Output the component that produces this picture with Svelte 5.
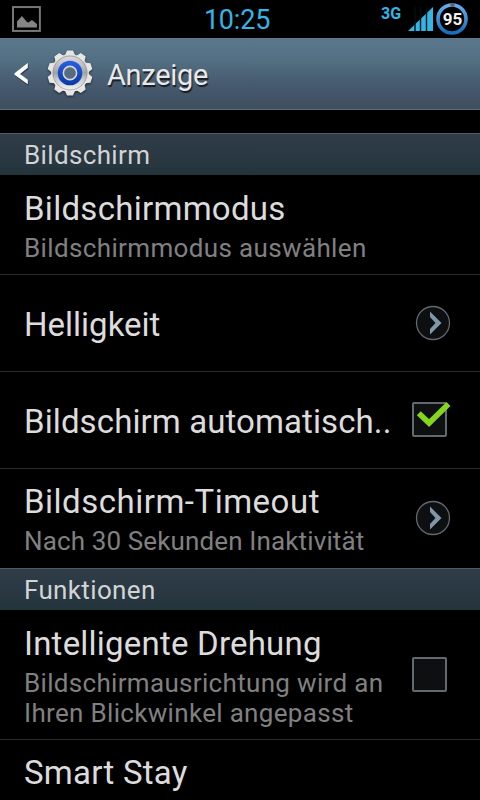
<script lang="ts">
  interface Item {
    title: string;
    tracking: number;
    summary?: string;
    summaryTracking?: number;
    widget?: "arrow" | "checkbox";
    checked?: boolean;
    height: number;
  }

  interface Section {
    label: string;
    items: Item[];
  }

  let sections: Section[] = $state([
    {
      label: "Bildschirm",
      items: [
        {
          title: "Bildschirmmodus",
          tracking: 0.28,
          summary: "Bildschirmmodus auswählen",
          summaryTracking: 0.36,
          height: 100,
        },
        { title: "Helligkeit", tracking: 0, widget: "arrow", height: 97 },
        {
          title: "Bildschirm automatisch..",
          tracking: 0.1,
          widget: "checkbox",
          checked: true,
          height: 97,
        },
        {
          title: "Bildschirm-Timeout",
          tracking: 0.5,
          summary: "Nach 30 Sekunden Inaktivität",
          summaryTracking: 0.13,
          widget: "arrow",
          height: 99,
        },
      ],
    },
    {
      label: "Funktionen",
      items: [
        {
          title: "Intelligente Drehung",
          tracking: 0.21,
          summary: "Bildschirmausrichtung wird an Ihren Blickwinkel angepasst",
          summaryTracking: 0.32,
          widget: "checkbox",
          checked: false,
          height: 130,
        },
        { title: "Smart Stay", tracking: 0.25, height: 64 },
      ],
    },
  ]);

  const teeth = [0, 36, 72, 108, 144, 180, 216, 252, 288, 324];
</script>

<div class="screen">
  <div class="status-bar">
    <svg class="picture" width="29" height="26" viewBox="0 0 29 26">
      <rect x="1" y="1" width="27" height="24" fill="none" stroke="#777" stroke-width="2" />
      <path d="M5 21.500v-6l5-5.500 5 6 1.500.5 3.500-2.500 5 4v3.500z" fill="#858585" />
    </svg>
    <span class="clock">10:25</span>
    <span class="network">3G</span>
    <svg class="signal" width="25" height="24" viewBox="0 0 25 24">
      <path d="M0 24L25 0v24z" fill="#33b5e5" />
      <path d="M7 0v24M12.500 0v24M18.500 0v24" stroke="#001018" stroke-width="1.400" />
    </svg>
    <svg class="battery" width="34" height="34" viewBox="0 0 34 34">
      <defs>
        <linearGradient id="ring" x1="0" y1="0" x2="0" y2="1">
          <stop offset="0" stop-color="#65adeb" />
          <stop offset="1" stop-color="#166fbd" />
        </linearGradient>
      </defs>
      <circle cx="17" cy="17" r="14" fill="#000" stroke="url(#ring)" stroke-width="3.600" />
      <path d="M15.500 3h4" stroke="#5b6066" stroke-width="3.200" />
      <text x="17.500" y="23" text-anchor="middle">95</text>
    </svg>
  </div>

  <header class="action-bar">
    <svg class="back" width="16" height="26" viewBox="0 0 16 26">
      <path d="M14.500 2.500v4.800L6.500 13l8 6v4.800L1 14v-2z" fill="#1e2a35" opacity=".7" />
      <path d="M13.800 1v4.800L6 12l7.800 5.800v4.500L.5 12.700v-1.400z" fill="#fff" />
    </svg>
    <svg class="gear" width="50" height="50" viewBox="-25 -25 50 50">
      <defs>
        <linearGradient id="metal" x1="0" y1="0" x2="0" y2="1">
          <stop offset="0" stop-color="#dedede" />
          <stop offset=".5" stop-color="#d4d4d4" />
          <stop offset="1" stop-color="#fafafa" />
        </linearGradient>
        <linearGradient id="disc" x1="0" y1="0" x2="0" y2="1">
          <stop offset="0" stop-color="#dcdcdc" />
          <stop offset=".3" stop-color="#bcbcbc" />
          <stop offset=".5" stop-color="#a2a2a2" />
          <stop offset=".7" stop-color="#cccccc" />
          <stop offset="1" stop-color="#f2f2f2" />
        </linearGradient>
        <linearGradient id="blue" x1="0" y1="0" x2="0" y2="1">
          <stop offset="0" stop-color="#2a5fe4" />
          <stop offset="1" stop-color="#0939a4" />
        </linearGradient>
      </defs>
      <g class="wheel">
        <circle r="19" fill="url(#metal)" />
        {#each teeth as angle}
          <path
            d="M-5-17.800l2-4.700h6l2 4.700z"
            fill="#e6e6e6"
            transform="rotate({angle})"
          />
        {/each}
      </g>
      <circle r="17" fill="url(#disc)" stroke="#8c8c8c" stroke-width=".7" />
      <circle r="12.300" fill="url(#blue)" />
      <circle r="6.500" fill="#566c80" stroke="#d8d8d8" stroke-width="1.800" />
      <circle r="5.500" fill="none" stroke="#6a6a6a" stroke-width=".6" />
    </svg>
    <h1>Anzeige</h1>
  </header>

  <main>
    {#each sections as section}
      <h2>{section.label}</h2>
      {#each section.items as item}
        <div class="item" style:height="{item.height}px">
          <div class="texts">
            <div class="title" style:letter-spacing="{item.tracking}px">{item.title}</div>
            {#if item.summary}
              <div class="summary" style:letter-spacing="{item.summaryTracking}px">
                {item.summary}
              </div>
            {/if}
          </div>
          {#if item.widget === "arrow"}
            <svg class="arrow" width="36" height="36" viewBox="0 0 36 36">
              <circle cx="18" cy="18" r="16.500" fill="#0d0f11" stroke="#62686e" stroke-width="1.300" />
              <path d="M15 6.500L26.500 18 15 29.500v-5.500L20.500 18 15 12z" fill="#8097ab" />
            </svg>
          {:else if item.widget === "checkbox"}
            <button
              class="check"
              role="checkbox"
              aria-checked={item.checked}
              aria-label={item.title}
              onclick={() => (item.checked = !item.checked)}
            >
              <svg width="40" height="36" viewBox="0 0 40 36">
                <rect x="1" y="2" width="33" height="33" rx="1" fill="#0d0f11" stroke="#62696f" stroke-width="2" />
                {#if item.checked}
                  <path d="M6.800 12.200l10.300 9.800L36.500 3" fill="none" stroke="#86d41b" stroke-width="5.600" />
                {/if}
              </svg>
            </button>
          {/if}
        </div>
      {/each}
    {/each}
  </main>
</div>

<style>
  :global(body) {
    margin: 0;
    background: #000;
    overflow: hidden;
  }

  .screen {
    width: 480px;
    height: 800px;
    overflow: hidden;
    background: #000;
    color: #dcdcdc;
    font-family: Roboto, sans-serif;
  }

  .status-bar {
    display: flex;
    box-sizing: border-box;
    height: 38px;
    padding: 0 11px 0 12px;
    color: #33b5e5;
  }

  .picture {
    margin-top: 6px;
  }

  .clock {
    margin-left: 163px;
    width: 178px;
    font-size: 27px;
    line-height: 40px;
    letter-spacing: -0.2px;
  }

  .network {
    width: 27px;
    font-size: 16px;
    font-weight: 700;
    line-height: 27px;
  }

  .signal {
    margin-top: 7px;
    flex-shrink: 0;
  }

  .battery {
    margin: 2px 0 0 2px;
    flex-shrink: 0;
  }

  .battery text {
    fill: #f2f2f2;
    font-size: 17px;
    font-weight: 700;
  }

  .action-bar {
    display: flex;
    align-items: center;
    box-sizing: border-box;
    height: 72px;
    padding-left: 14px;
    background: linear-gradient(#5b778d, #537083 30%, #485d72 60%, #3e4e5e);
    border-bottom: 1px solid #5b6c7c;
  }

  .back {
    margin-top: 2px;
  }

  .gear {
    margin: -1px 0 0 15px;
  }

  .wheel {
    filter: drop-shadow(0 1px 1px rgba(0, 0, 0, 0.6));
  }

  h1 {
    margin: 3px 0 0 12px;
    font-size: 29px;
    font-weight: 400;
    letter-spacing: -0.3px;
    color: #e8e8e8;
    text-shadow: 1px 2px 1px rgba(0, 0, 0, 0.7);
  }

  main {
    padding-top: 23px;
  }

  h2 {
    box-sizing: border-box;
    height: 42px;
    margin: 0;
    padding-left: 24px;
    border-top: 1px solid #4d5b66;
    background: linear-gradient(#2f3d48, #24343c);
    color: #d2d4d5;
    font-size: 26px;
    font-weight: 400;
    line-height: 42px;
    letter-spacing: 0.35px;
  }

  .item {
    display: flex;
    align-items: center;
    box-sizing: border-box;
    padding: 0 29px 0 24px;
    border-bottom: 1px solid #2a2a2a;
  }

  .item:has(+ h2) {
    border-bottom-color: transparent;
  }

  .texts {
    flex: 1;
    min-width: 0;
    padding-top: 3px;
  }

  .item:has(+ h2) .texts {
    padding-top: 1px;
  }

  .title {
    font-size: 33px;
    line-height: 40px;
    white-space: nowrap;
  }

  .summary {
    width: 370px;
    margin-top: 4px;
    color: #808080;
    font-size: 26px;
    line-height: 30px;
  }

  .arrow {
    flex-shrink: 0;
  }

  .check {
    display: flex;
    flex-shrink: 0;
    margin: 0 -1px 2px 0;
    padding: 0;
    border: 0;
    background: none;
  }
</style>
